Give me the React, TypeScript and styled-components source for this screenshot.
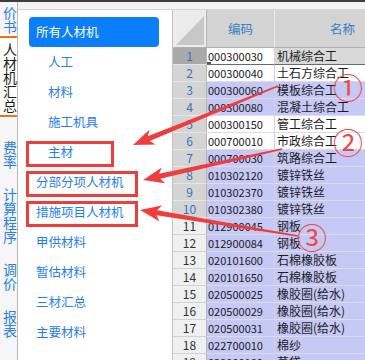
import React from 'react';
import styled, { createGlobalStyle } from 'styled-components';

const GlobalStyle = createGlobalStyle`
  html, body {
    margin: 0;
    padding: 0;
    overflow: hidden;
    background: #fff;
  }
  body {
    font-family: "Noto Sans CJK SC", "Liberation Sans", sans-serif;
  }
  * {
    box-sizing: border-box;
  }
`;

const Screen = styled.div`
  position: relative;
  display: flex;
  width: 365px;
  height: 360px;
  overflow: hidden;
  border-top: 2px solid #3d3d3d;
`;

const SideTabs = styled.div`
  flex: none;
  display: flex;
  flex-direction: column;
  width: 18px;
  background: #f6f6f8;
  border-right: 1px solid #b9b9b9;
`;

const Tab = styled.div<{ $active?: boolean; $height?: number; $padTop?: number }>`
  display: flex;
  justify-content: center;
  height: ${(p) => (p.$height ? `${p.$height}px` : 'auto')};
  padding-top: ${(p) => p.$padTop ?? 0}px;
  border-bottom: ${(p) => (p.$height ? '2px solid #f0701e' : 'none')};
  background: ${(p) => (p.$active ? '#fff' : 'transparent')};
  color: ${(p) => (p.$active ? '#1e1e1e' : '#2a7ff0')};
  font-size: 14px;
  line-height: 15px;
  writing-mode: vertical-rl;
`;

const TabGroup = styled.div`
  display: flex;
  flex-direction: column;
  gap: 19px;
  padding-top: 24px;
`;

const Main = styled.div`
  flex: 1;
  display: flex;
  flex-direction: column;
  min-width: 0;
`;

const TopBand = styled.div`
  flex: none;
  height: 8px;
  background: #f3f3f3;
  border-bottom: 1px solid #d2d2d2;
`;

const Workspace = styled.div`
  flex: 1;
  display: flex;
  min-height: 0;
`;

const NavPanel = styled.div`
  flex: none;
  width: 155px;
  padding-top: 7px;
  background: #fff;
  border-right: 1px solid #c4c4c4;
`;

const AllButton = styled.div`
  width: 130px;
  height: 30px;
  margin-left: 11px;
  padding-left: 7px;
  border-radius: 4px;
  background: #0b7ffb;
  color: #fff;
  font-size: 12.5px;
  line-height: 30px;
`;

const NavItem = styled.div<{ $sub?: boolean; $mark?: number }>`
  position: relative;
  height: 30px;
  padding-left: ${(p) => (p.$sub ? 30 : 18)}px;
  color: #1f7ef5;
  font-size: 12.5px;
  line-height: 30px;
  white-space: nowrap;

  &::after {
    content: '';
    display: ${(p) => (p.$mark ? 'block' : 'none')};
    position: absolute;
    left: 8px;
    top: 4px;
    width: ${(p) => p.$mark ?? 0}px;
    height: 20px;
    border: 3px solid #f03c3c;
  }
`;

const Sheet = styled.div`
  flex: 1;
  display: grid;
  grid-template-columns: 34px 68px 136px;
  grid-template-rows: 38px;
  grid-auto-rows: 17px;
  overflow: hidden;
  font-size: 12px;
`;

const Corner = styled.div`
  background: #ececec;
  border-right: 1px solid #b5b5b5;
  border-bottom: 1px solid #b0b0b0;
  padding: 6px 2px 2px 3px;
`;

const CornerTriangle = styled.div`
  width: 100%;
  height: 100%;
  background: #c8c8c8;
  clip-path: polygon(100% 0, 100% 100%, 0 100%);
`;

const HeadCell = styled.div`
  display: flex;
  align-items: center;
  justify-content: center;
  background: #d4d4d4;
  border-right: 1px solid #ededed;
  border-bottom: 1px solid #b0b0b0;
  color: #3b7cc4;
  font-size: 12.5px;
`;

type RowTone = 'current' | 'picked' | 'plain';

const NumCell = styled.div<{ $tone: RowTone }>`
  text-align: center;
  line-height: 16px;
  background: ${(p) => (p.$tone === 'current' ? '#a9a9a9' : p.$tone === 'picked' ? '#d4d4d4' : '#f0f0f0')};
  color: ${(p) => (p.$tone === 'plain' ? '#333' : '#2e75c4')};
  border-right: 1px solid #b5b5b5;
  border-bottom: 1px solid ${(p) => (p.$tone === 'plain' ? '#d2d2d2' : '#e6e6e6')};
`;

type CellTone = 'white' | 'lilac' | 'gray';

const DataCell = styled.div<{ $tone: CellTone; $active?: boolean; $code?: boolean }>`
  position: relative;
  padding-left: ${(p) => (p.$code ? 1 : 2)}px;
  font-size: ${(p) => (p.$code ? 11 : 12)}px;
  line-height: 16px;
  white-space: nowrap;
  overflow: hidden;
  color: #1c1c1c;
  background: ${(p) => (p.$tone === 'lilac' ? '#c6c8f6' : p.$tone === 'gray' ? '#d9d9d9' : '#fff')};
  border-right: 1px solid #d2d3e2;
  border-bottom: 1px solid ${(p) => (p.$active ? '#6b6b6b' : '#dcdcea')};

  &::after {
    content: '';
    display: ${(p) => (p.$active && p.$code ? 'block' : 'none')};
    position: absolute;
    left: 0;
    bottom: -1px;
    width: 4px;
    height: 3px;
    background: #555;
  }
`;

const Overlay = styled.svg`
  position: absolute;
  left: 0;
  top: -2px;
  pointer-events: none;
`;

const rows: [string, string][] = [
  ['000300030', '机械综合工'],
  ['000300040', '土石方综合工'],
  ['000300060', '模板综合工'],
  ['000300080', '混凝土综合工'],
  ['000300150', '管工综合工'],
  ['000700010', '市政综合工'],
  ['000700030', '筑路综合工'],
  ['010302120', '镀锌铁丝'],
  ['010302370', '镀锌铁丝'],
  ['010302380', '镀锌铁丝'],
  ['012900045', '钢板'],
  ['012900084', '钢板'],
  ['020101600', '石棉橡胶板'],
  ['020101650', '石棉橡胶板'],
  ['020500025', '橡胶圈(给水)'],
  ['020500029', '橡胶圈(给水)'],
  ['020500031', '橡胶圈(给水)'],
  ['022700010', '棉纱'],
  ['022900100', '草袋'],
];

const whiteRows = [2, 5, 6];

// tapered arrow, thin at the tail and swept-back head at the tip
const arrowPoints = (tail: [number, number], tip: [number, number]) => {
  const [x0, y0] = tail;
  const [x1, y1] = tip;
  const len = Math.hypot(x1 - x0, y1 - y0);
  const ux = (x1 - x0) / len;
  const uy = (y1 - y0) / len;
  const nx = -uy;
  const ny = ux;
  const bx = x1 - ux * 17;
  const by = y1 - uy * 17;
  const wx = x1 - ux * 21;
  const wy = y1 - uy * 21;
  const pts = [
    [x0 + nx * 0.8, y0 + ny * 0.8],
    [bx + nx * 2.6, by + ny * 2.6],
    [wx + nx * 8, wy + ny * 8],
    [x1, y1],
    [wx - nx * 8, wy - ny * 8],
    [bx - nx * 2.6, by - ny * 2.6],
    [x0 - nx * 0.8, y0 - ny * 0.8],
  ];
  return pts.map(([x, y]) => `${x.toFixed(1)},${y.toFixed(1)}`).join(' ');
};

const arrows: { tail: [number, number]; tip: [number, number] }[] = [
  { tail: [278, 86], tip: [133, 145] },
  { tail: [282, 149], tip: [143, 180] },
  { tail: [298, 236], tip: [140, 210] },
];

const marks = [
  { label: '①', x: 348, y: 86 },
  { label: '②', x: 348, y: 141 },
  { label: '③', x: 312, y: 236 },
];

const App: React.FC = () => (
  <>
    <GlobalStyle />
    <Screen>
      <SideTabs>
        <Tab $height={36} $padTop={1}>价书</Tab>
        <Tab $height={79} $padTop={3} $active>
          人材机汇总
        </Tab>
        <TabGroup>
          <Tab>费率</Tab>
          <Tab>计算程序</Tab>
          <Tab>调价</Tab>
          <Tab>报表</Tab>
        </TabGroup>
      </SideTabs>

      <Main>
        <TopBand />
        <Workspace>
          <NavPanel>
            <AllButton>所有人材机</AllButton>
            <NavItem $sub>人工</NavItem>
            <NavItem $sub>材料</NavItem>
            <NavItem $sub>施工机具</NavItem>
            <NavItem $sub $mark={82}>
              主材
            </NavItem>
            <NavItem $mark={106}>分部分项人材机</NavItem>
            <NavItem $mark={106}>措施项目人材机</NavItem>
            <NavItem>甲供材料</NavItem>
            <NavItem>暂估材料</NavItem>
            <NavItem>三材汇总</NavItem>
            <NavItem>主要材料</NavItem>
          </NavPanel>

          <Sheet>
            <Corner>
              <CornerTriangle />
            </Corner>
            <HeadCell>编码</HeadCell>
            <HeadCell>名称</HeadCell>
            {rows.map(([code, name], i) => {
              const n = i + 1;
              const numTone: RowTone = n === 1 ? 'current' : n <= 10 ? 'picked' : 'plain';
              const tone: CellTone = n === 1 || whiteRows.includes(n) ? 'white' : 'lilac';
              return (
                <React.Fragment key={code + n}>
                  <NumCell $tone={numTone}>{n}</NumCell>
                  <DataCell $tone={tone} $active={n === 1} $code>
                    {code}
                  </DataCell>
                  <DataCell $tone={n === 1 ? 'gray' : tone} $active={n === 1}>
                    {name}
                  </DataCell>
                </React.Fragment>
              );
            })}
          </Sheet>
        </Workspace>
      </Main>

      <Overlay width={365} height={360} viewBox="0 0 365 360">
        {arrows.map((a, i) => (
          <polygon key={i} points={arrowPoints(a.tail, a.tip)} fill="#f03c3c" />
        ))}
        {marks.map((m) => (
          <text
            key={m.label}
            x={m.x}
            y={m.y}
            fill="#f04848"
            fontSize={30}
            fontFamily='"Noto Sans CJK SC", sans-serif'
            textAnchor="middle"
            dominantBaseline="central"
          >
            {m.label}
          </text>
        ))}
      </Overlay>
    </Screen>
  </>
);

export default App;
